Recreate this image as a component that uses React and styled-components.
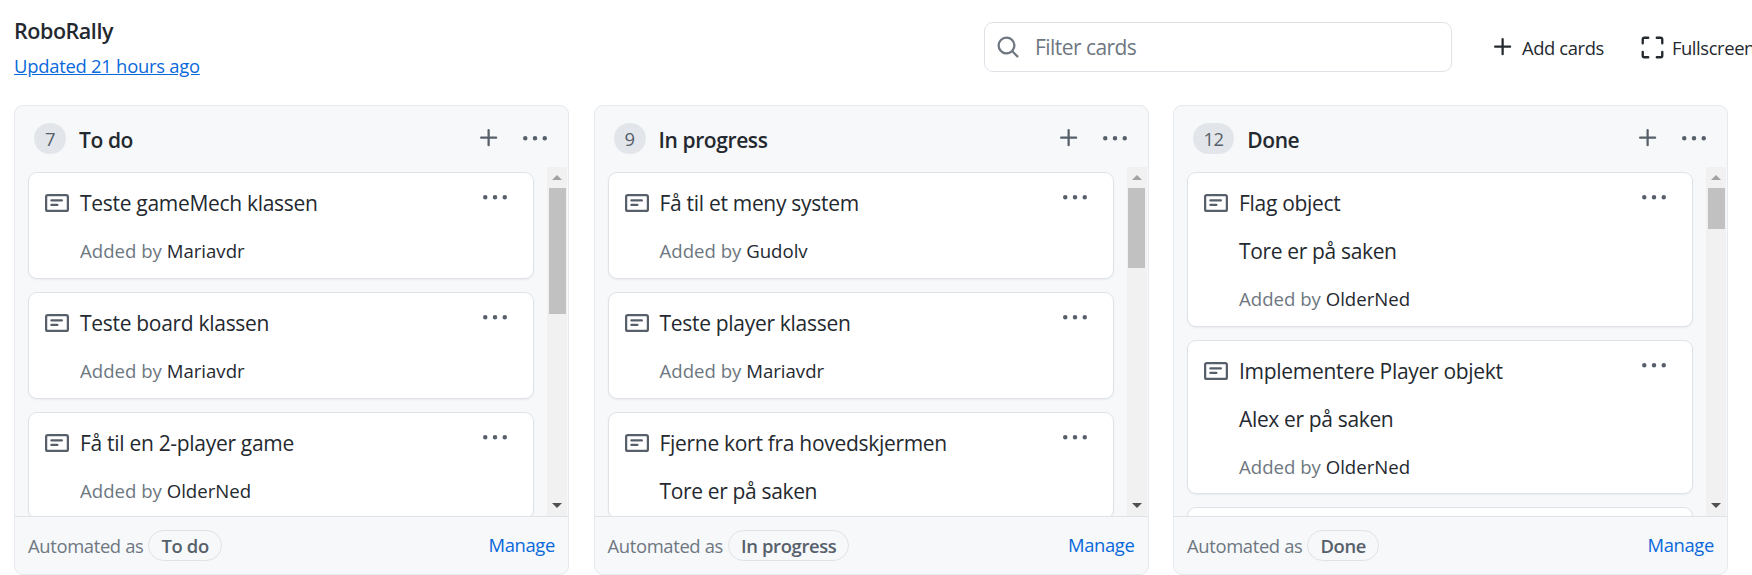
import React from "react";
import styled, { createGlobalStyle } from "styled-components";

const Global = createGlobalStyle`
  html, body { margin: 0; padding: 0; background: #fff; overflow: hidden; }
  body { font-family: "Open Sans", "Noto Sans", sans-serif; color: #24292f; }
  * { box-sizing: border-box; }
`;

const Page = styled.div`
  width: 1752px;
  height: 575px;
  overflow: hidden;
  padding: 0 0 0 14px;
`;
const TopBar = styled.header`
  height: 105px;
  display: flex;
  align-items: flex-start;
  width: max-content;
`;
const TitleBlock = styled.div`
  width: 970px;
  padding-top: 15px;
`;
const BoardTitle = styled.h1`
  margin: 0;
  font-size: 21.5px;
  line-height: 32px;
  font-weight: 600;
  letter-spacing: -0.45px;
`;
const Updated = styled.a`
  display: inline-block;
  margin-top: 4px;
  font-size: 18.4px;
  line-height: 30px;
  letter-spacing: -0.25px;
  color: #0969da;
  text-decoration: underline;
`;
const Search = styled.label`
  width: 468px;
  height: 50px;
  margin-top: 22px;
  border: 1px solid #dfe3e8;
  border-radius: 9px;
  display: flex;
  align-items: center;
  padding-left: 11px;
  gap: 13px;
  color: #6e7781;
`;
const SearchInput = styled.input`
  border: 0;
  outline: 0;
  flex: 1;
  min-width: 0;
  font: inherit;
  font-size: 21px;
  letter-spacing: -0.55px;
  background: transparent;
  &::placeholder { color: #6e7781; opacity: 1; }
`;
const Action = styled.div`
  display: flex;
  align-items: center;
  flex: none;
  height: 30px;
  margin: 32px 0 0 ${(p) => p.$ml}px;
  gap: ${(p) => p.$gap}px;
  font-size: 18.4px;
  letter-spacing: -0.4px;
  white-space: nowrap;
`;
const Board = styled.main`
  display: grid;
  grid-template-columns: repeat(3, 555px);
  column-gap: 24.5px;
`;
const Column = styled.section`
  height: 470px;
  background: #f6f8fa;
  border: 1px solid #e6e9ed;
  border-radius: 9px;
  display: flex;
  flex-direction: column;
  overflow: hidden;
`;
const ColumnHead = styled.div`
  height: 61px;
  flex: none;
  display: flex;
  align-items: center;
  padding: 0 21px 0 19px;
`;
const Count = styled.span`
  min-width: 32px;
  height: 31px;
  padding: 0 10.5px;
  margin-top: 3px;
  border-radius: 16px;
  background: #e2e6ea;
  color: #57606a;
  font-size: 18.4px;
  letter-spacing: -0.4px;
  display: flex;
  align-items: center;
  justify-content: center;
`;
const ColumnTitle = styled.h2`
  margin: 7px auto 0 13px;
  font-size: 21px;
  font-weight: 600;
  letter-spacing: -0.4px;
`;
const HeadIcon = styled.span`
  display: flex;
  color: #57606a;
  margin-left: ${(p) => p.$ml || 0}px;
  margin-top: ${(p) => p.$mt}px;
`;
const ListRow = styled.div`
  flex: 1;
  min-height: 0;
  display: flex;
`;
const Cards = styled.div`
  flex: 1;
  min-width: 0;
  overflow: hidden;
  padding: 5px 13px 0 13px;
  display: flex;
  flex-direction: column;
  gap: 13px;
`;
const Card = styled.article`
  flex: none;
  min-height: 107px;
  background: #fff;
  border: 1px solid #dfe3e8;
  border-radius: 9px;
  box-shadow: 0 1px 2px rgba(31, 35, 40, 0.06);
  padding: 15px 15px 11.5px 16px;
`;
const CardHead = styled.div`
  display: flex;
  align-items: flex-start;
`;
const NoteIcon = styled.svg`
  flex: none;
  width: 24px;
  height: 24px;
  margin: 3px 11px 0 0;
  fill: #57606a;
`;
const CardTitle = styled.div`
  flex: 1;
  font-size: 21px;
  line-height: 30px;
  letter-spacing: -0.3px;
`;
const CardMenu = styled.span`
  display: flex;
  color: #57606a;
  margin: -2px 11px 0 0;
`;
const Body = styled.div`
  margin: 18px 0 0 35px;
  font-size: 21px;
  line-height: 30px;
  letter-spacing: -0.35px;
`;
const Meta = styled.div`
  margin: 18px 0 0 35px;
  font-size: 18.6px;
  line-height: 30px;
  letter-spacing: 0;
  color: #6e7781;
`;
const Author = styled.span`
  color: #24292f;
`;
const Scrollbar = styled.div`
  flex: none;
  width: 20px;
  margin-right: 1px;
  background: #f1f1f1;
  display: flex;
  flex-direction: column;
  align-items: center;
`;
const ArrowBox = styled.div`
  flex: none;
  height: 21px;
  display: flex;
  align-items: center;
  justify-content: center;
`;
const Arrow = styled.span`
  width: 0;
  height: 0;
  border-left: 5px solid transparent;
  border-right: 5px solid transparent;
  ${(p) => (p.$up ? "border-bottom: 5px solid #a3a3a3;" : "border-top: 5px solid #505050;")}
`;
const Track = styled.div`
  flex: 1;
  width: 100%;
  display: flex;
  justify-content: center;
`;
const Thumb = styled.div`
  width: 17px;
  height: ${(p) => p.$h}px;
  background: #c1c1c1;
`;
const Footer = styled.footer`
  height: 58px;
  flex: none;
  border-top: 1px solid #dfe3e8;
  display: flex;
  align-items: center;
  padding: 0 13px 0 13px;
  font-size: 18.4px;
  letter-spacing: -0.35px;
  color: #6e7781;
`;
const Chip = styled.span`
  margin: -1px auto 0 5px;
  height: 31px;
  padding: 0 12px;
  border: 1px solid #dfe3e8;
  border-radius: 16px;
  font-weight: 600;
  color: #57606a;
  display: flex;
  align-items: center;
`;
const Manage = styled.a`
  color: #0969da;
  margin-top: -3px;
  text-decoration: none;
`;

const Oct = ({ d, size = 24 }) => (
  <svg width={size} height={size} viewBox="0 0 16 16" fill="currentColor" style={{ display: "block" }}>
    <path d={d} />
  </svg>
);
const PLUS = "M7.75 2a.75.75 0 0 1 .75.75V7h4.25a.75.75 0 0 1 0 1.5H8.5v4.25a.75.75 0 0 1-1.5 0V8.5H2.75a.75.75 0 0 1 0-1.5H7V2.75A.75.75 0 0 1 7.75 2Z";
const KEBAB = "M8 9a1.5 1.5 0 1 0 0-3 1.5 1.5 0 0 0 0 3ZM1.5 9a1.5 1.5 0 1 0 0-3 1.5 1.5 0 0 0 0 3Zm13 0a1.5 1.5 0 1 0 0-3 1.5 1.5 0 0 0 0 3Z";
const SEARCH = "M10.68 11.74a6 6 0 0 1-7.922-8.982 6 6 0 0 1 8.982 7.922l3.04 3.04a.749.749 0 0 1-.326 1.275.749.749 0 0 1-.734-.215ZM11.5 7a4.499 4.499 0 1 0-8.997 0A4.499 4.499 0 0 0 11.5 7Z";
const SCREEN = "M1.75 10a.75.75 0 0 1 .75.75v2.5c0 .138.112.25.25.25h2.5a.75.75 0 0 1 0 1.5h-2.5A1.75 1.75 0 0 1 1 13.25v-2.5a.75.75 0 0 1 .75-.75Zm12.5 0a.75.75 0 0 1 .75.75v2.5A1.75 1.75 0 0 1 13.25 15h-2.5a.75.75 0 0 1 0-1.5h2.5a.25.25 0 0 0 .25-.25v-2.5a.75.75 0 0 1 .75-.75ZM2.75 2.5a.25.25 0 0 0-.25.25v2.5a.75.75 0 0 1-1.5 0v-2.5C1 1.784 1.784 1 2.75 1h2.5a.75.75 0 0 1 0 1.5ZM10 1.75a.75.75 0 0 1 .75-.75h2.5c.966 0 1.75.784 1.75 1.75v2.5a.75.75 0 0 1-1.5 0v-2.5a.25.25 0 0 0-.25-.25h-2.5a.75.75 0 0 1-.75-.75Z";
const NOTE = "M0 3.75C0 2.784.784 2 1.75 2h12.5c.966 0 1.75.784 1.75 1.75v8.5A1.75 1.75 0 0 1 14.25 14H1.75A1.75 1.75 0 0 1 0 12.25Zm1.75-.25a.25.25 0 0 0-.25.25v8.5c0 .138.112.25.25.25h12.5a.25.25 0 0 0 .25-.25v-8.5a.25.25 0 0 0-.25-.25ZM3.5 6.25a.75.75 0 0 1 .75-.75h7a.75.75 0 0 1 0 1.5h-7a.75.75 0 0 1-.75-.75Zm.75 2.25h4a.75.75 0 0 1 0 1.5h-4a.75.75 0 0 1 0-1.5Z";

const columns = [
  {
    name: "To do", count: 7, thumb: 126,
    cards: [
      { title: "Teste gameMech klassen", by: "Mariavdr" },
      { title: "Teste board klassen", by: "Mariavdr" },
      { title: "Få til en 2-player game", by: "OlderNed" },
    ],
  },
  {
    name: "In progress", count: 9, thumb: 80,
    cards: [
      { title: "Få til et meny system", by: "Gudolv" },
      { title: "Teste player klassen", by: "Mariavdr" },
      { title: "Fjerne kort fra hovedskjermen", body: "Tore er på saken" },
    ],
  },
  {
    name: "Done", count: 12, thumb: 41,
    cards: [
      { title: "Flag object", body: "Tore er på saken", by: "OlderNed" },
      { title: "Implementere Player objekt", body: "Alex er på saken", by: "OlderNed" },
      {},
    ],
  },
];

export default function App() {
  return (
    <Page>
      <Global />
      <TopBar>
        <TitleBlock>
          <BoardTitle>RoboRally</BoardTitle>
          <Updated href="#">Updated 21 hours ago</Updated>
        </TitleBlock>
        <Search>
          <Oct d={SEARCH} size={24} />
          <SearchInput placeholder="Filter cards" readOnly />
        </Search>
        <Action $ml={39} $gap={7}>
          <Oct d={PLUS} />
          Add cards
        </Action>
        <Action $ml={36} $gap={7}>
          <Oct d={SCREEN} size={25} />
          Fullscreen
        </Action>
      </TopBar>
      <Board>
        {columns.map((c) => (
          <Column key={c.name}>
            <ColumnHead>
              <Count>{c.count}</Count>
              <ColumnTitle>{c.name}</ColumnTitle>
              <HeadIcon $mt={2}><Oct d={PLUS} /></HeadIcon>
              <HeadIcon $ml={22} $mt={4}><Oct d={KEBAB} /></HeadIcon>
            </ColumnHead>
            <ListRow>
              <Cards>
                {c.cards.map((card, i) => (
                  <Card key={i}>
                    {card.title && (
                      <CardHead>
                        <NoteIcon viewBox="0 0 16 16"><path d={NOTE} /></NoteIcon>
                        <CardTitle>{card.title}</CardTitle>
                        <CardMenu><Oct d={KEBAB} /></CardMenu>
                      </CardHead>
                    )}
                    {card.body && <Body>{card.body}</Body>}
                    {card.by && <Meta>Added by <Author>{card.by}</Author></Meta>}
                  </Card>
                ))}
              </Cards>
              <Scrollbar>
                <ArrowBox><Arrow $up /></ArrowBox>
                <Track><Thumb $h={c.thumb} /></Track>
                <ArrowBox><Arrow /></ArrowBox>
              </Scrollbar>
            </ListRow>
            <Footer>
              Automated as
              <Chip>{c.name}</Chip>
              <Manage href="#">Manage</Manage>
            </Footer>
          </Column>
        ))}
      </Board>
    </Page>
  );
}
